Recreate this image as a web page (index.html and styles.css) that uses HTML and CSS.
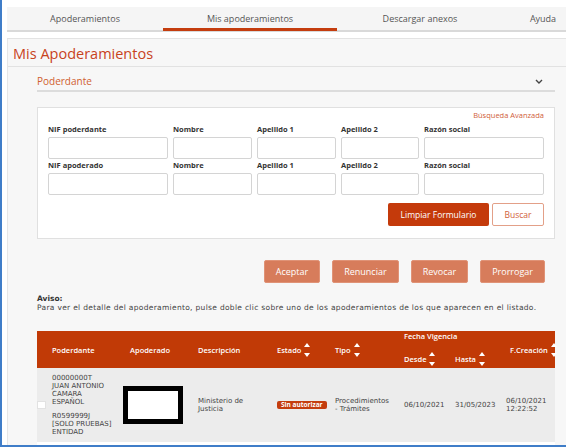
FILE: index.html
```html
<!DOCTYPE html>
<html lang="es">
<head>
<meta charset="utf-8">
<title>Mis Apoderamientos</title>
<link rel="stylesheet" href="styles.css">
</head>
<body>
<div class="frame">
  <nav class="tabs">
    <a class="tab tab-1">Apoderamientos</a>
    <a class="tab tab-2 active">Mis apoderamientos</a>
    <a class="tab tab-3">Descargar anexos</a>
    <a class="tab tab-4">Ayuda</a>
  </nav>
  <main class="panel">
    <h1 class="title">Mis Apoderamientos</h1>
    <div class="content">
      <div class="section-head">
        <span>Poderdante</span>
        <svg class="chevron" width="8" height="5" viewBox="0 0 8 5"><path d="M1 1 L4 4 L7 1" fill="none" stroke="#444" stroke-width="1.4"/></svg>
      </div>
      <form class="search">
        <div class="adv"><a>Búsqueda Avanzada</a></div>
        <div class="fgrid">
          <div class="field"><label class="lbl">NIF poderdante</label><input type="text"></div>
          <div class="field"><label class="lbl">Nombre</label><input type="text"></div>
          <div class="field"><label class="lbl">Apellido 1</label><input type="text"></div>
          <div class="field"><label class="lbl">Apellido 2</label><input type="text"></div>
          <div class="field"><label class="lbl">Razón social</label><input type="text"></div>
          <div class="field"><label class="lbl">NIF apoderado</label><input type="text"></div>
          <div class="field"><label class="lbl">Nombre</label><input type="text"></div>
          <div class="field"><label class="lbl">Apellido 1</label><input type="text"></div>
          <div class="field"><label class="lbl">Apellido 2</label><input type="text"></div>
          <div class="field"><label class="lbl">Razón social</label><input type="text"></div>
        </div>
        <div class="form-actions">
          <button type="button" class="btn-primary">Limpiar Formulario</button>
          <button type="button" class="btn-outline">Buscar</button>
        </div>
      </form>
      <div class="actions">
        <button type="button" class="btn-action">Aceptar</button>
        <button type="button" class="btn-action">Renunciar</button>
        <button type="button" class="btn-action">Revocar</button>
        <button type="button" class="btn-action">Prorrogar</button>
      </div>
      <div class="aviso">
        <b>Aviso:</b>
        <p>Para ver el detalle del apoderamiento, pulse doble clic sobre uno de los apoderamientos de los que aparecen en el listado.</p>
      </div>
      <table class="list">
        <colgroup>
          <col class="w-pod"><col class="w-apo"><col class="w-des"><col class="w-est"><col class="w-tipo"><col class="w-desde"><col class="w-hasta"><col class="w-crea">
        </colgroup>
        <thead>
          <tr class="hr1">
            <th rowspan="2" class="th-pod">Poderdante</th>
            <th rowspan="2">Apoderado</th>
            <th rowspan="2">Descripción</th>
            <th rowspan="2"><span class="sort">Estado<i class="arrows"></i></span></th>
            <th rowspan="2"><span class="sort">Tipo<i class="arrows"></i></span></th>
            <th colspan="2" class="th-fv">Fecha Vigencia</th>
            <th rowspan="2" class="th-crea"><span class="sort">F.Creación<i class="arrows"></i></span></th>
          </tr>
          <tr class="hr2">
            <th><span class="sort">Desde<i class="arrows"></i></span></th>
            <th><span class="sort">Hasta<i class="arrows"></i></span></th>
          </tr>
        </thead>
        <tbody>
          <tr class="row">
            <td>
              <div class="pod-cell">
                <span class="check"></span>
                <div class="pod-text">
                  <div>00000000T<br>JUAN ANTONIO<br>CAMARA<br>ESPAÑOL</div>
                  <div class="entity">R0599999J<br>[SOLO PRUEBAS]<br>ENTIDAD</div>
                </div>
              </div>
            </td>
            <td><div class="redacted"></div></td>
            <td>Ministerio de<br>Justicia</td>
            <td><span class="badge">Sin autorizar</span></td>
            <td>Procedimientos<br>- Trámites</td>
            <td>06/10/2021</td>
            <td>31/05/2023</td>
            <td>06/10/2021<br>12:22:52</td>
          </tr>
          <tr class="row-next"><td colspan="8"></td></tr>
        </tbody>
      </table>
    </div>
  </main>
</div>
</body>
</html>
```

FILE: styles.css
```css
html, body {
  margin: 0;
  background: #fff;
  font-family: "Open Sans", "Liberation Sans", sans-serif;
}

.frame {
  width: 566px;
  height: 447px;
  box-sizing: border-box;
  border-left: 2px solid #3f7dc8;
  border-bottom: 2px solid #3f7dc8;
  padding: 7px 0 0 5px;
  overflow: hidden;
}

/* Tabs */
.tabs {
  display: flex;
  height: 23px;
  background: #f5f5f5;
  border-bottom: 2px solid #d9d9d9;
}
.tab {
  flex: none;
  display: flex;
  align-items: center;
  justify-content: center;
  font-size: 9px;
  color: #555;
  position: relative;
  white-space: nowrap;
}
.tab-1 { width: 156px; }
.tab-2 { width: 174px; }
.tab-3 { width: 166px; }
.tab-4 { width: 80px; }
.tab.active::after {
  content: "";
  position: absolute;
  left: 0;
  right: 0;
  bottom: -1px;
  height: 3px;
  background: #c43d0e;
}

/* Panel */
.panel {
  margin-top: 6px;
  background: #f7f7f7;
  border-top: 1px solid #e3e3e3;
  border-left: 1px solid #e6e6e6;
  height: 420px;
}
.title {
  margin: 0;
  padding: 5px 0 2px 5px;
  font-size: 14.5px;
  line-height: 20px;
  font-weight: 400;
  color: #c8431d;
  border-bottom: 1px solid #e2e2e2;
}
.content {
  padding: 0 11px 0 29px;
}

.section-head {
  display: flex;
  justify-content: space-between;
  align-items: center;
  padding: 8px 12px 3px 0;
  line-height: 12px;
  font-size: 10px;
  color: #d0602f;
  border-bottom: 2px solid #dcdcdc;
}
.chevron { display: block; }

/* Search form */
.search {
  margin: 15px 0 0;
  background: #fff;
  border: 1px solid #e0e0e0;
  padding: 2px 10px 12px 10px;
}
.adv {
  text-align: right;
  font-size: 7.5px;
  line-height: 10px;
  color: #d0603a;
  margin-bottom: 4px;
}
.fgrid {
  display: grid;
  grid-template-columns: 120px 79px 79px 78px 120px;
  column-gap: 5px;
  row-gap: 1px;
}
.lbl {
  display: block;
  font-size: 7.5px;
  font-weight: 700;
  line-height: 10px;
  color: #333;
  margin-bottom: 3px;
}
.field input {
  display: block;
  width: 100%;
  height: 22px;
  box-sizing: border-box;
  margin: 0;
  border: 1px solid #d4d4d4;
  border-radius: 2px;
  background: #fff;
}
.form-actions {
  display: flex;
  justify-content: flex-end;
  gap: 3px;
  margin-top: 8px;
}
.btn-primary, .btn-outline, .btn-action {
  font-family: inherit;
  height: 23px;
  border-radius: 2px;
  font-size: 8.5px;
  padding: 0;
  cursor: pointer;
}
.btn-primary {
  width: 101px;
  background: #c43a0b;
  color: #fff;
  border: none;
}
.btn-outline {
  width: 52px;
  background: #fff;
  color: #d0603a;
  border: 1px solid #e3a088;
}

/* Actions */
.actions {
  display: flex;
  justify-content: flex-end;
  gap: 12px;
  margin-top: 21px;
  padding-right: 10px;
}
.btn-action {
  background: #d77c5b;
  color: #fff;
  border: 1px solid #e09377;
  padding: 0 11px;
  font-size: 9px;
}

/* Aviso */
.aviso {
  margin-top: 11px;
  font-family: "DejaVu Sans", "Open Sans", sans-serif;
  font-size: 7.5px;
  line-height: 9px;
  letter-spacing: 0.31px;
  color: #444;
}
.aviso b { display: block; font-weight: 700; color: #333; letter-spacing: 0; }
.aviso p { margin: 0; white-space: nowrap; }

/* Table */
.list {
  margin-top: 19px;
  width: 518px;
  border-collapse: collapse;
  table-layout: fixed;
}
.w-pod { width: 93px; }
.w-apo { width: 68px; }
.w-des { width: 79px; }
.w-est { width: 58px; }
.w-tipo { width: 69px; }
.w-desde { width: 51px; }
.w-hasta { width: 51px; }
.w-crea { width: 49px; }

.list th {
  background: #c13a06;
  color: #fff;
  font-weight: 600;
  font-size: 7.5px;
  text-align: left;
  padding: 0;
  white-space: nowrap;
  vertical-align: middle;
}
.hr1 th, .hr2 th { height: 18px; }
.th-pod { padding-left: 15px !important; }
.th-crea { padding-left: 4px !important; }
.th-fv { vertical-align: top !important; padding-top: 1px !important; line-height: 9px; }

.sort {
  display: inline-flex;
  align-items: center;
}
.arrows {
  display: inline-flex;
  flex-direction: column;
  gap: 6px;
  margin-left: 3px;
}
.arrows::before, .arrows::after {
  content: "";
  width: 0;
  height: 0;
  border-left: 3px solid transparent;
  border-right: 3px solid transparent;
}
.arrows::before { border-bottom: 4px solid #fff; }
.arrows::after { border-top: 4px solid #fff; }

.row td {
  background: #ececec;
  height: 74px;
  padding: 0;
  vertical-align: middle;
  font-family: "DejaVu Sans", "Open Sans", sans-serif;
  font-size: 7px;
  line-height: 8.2px;
  color: #444;
  white-space: nowrap;
}
.pod-cell {
  display: flex;
  align-items: center;
  gap: 6px;
}
.check {
  flex: none;
  width: 9px;
  height: 8px;
  background: #fff;
  border: 1px solid #e2e2e2;
  box-sizing: border-box;
}
.entity { margin-top: 5px; }
.redacted {
  width: 60px;
  height: 38px;
  box-sizing: border-box;
  border: 5px solid #000;
  background: #fff;
  margin-left: -7px;
}
.badge {
  display: inline-block;
  background: #c43d0e;
  color: #fff;
  font-family: "Open Sans", sans-serif;
  font-weight: 700;
  font-size: 6.5px;
  line-height: 8px;
  padding: 0 4px;
  border-radius: 2px;
}
.row-next td {
  height: 20px;
  background: #fff;
}
```
